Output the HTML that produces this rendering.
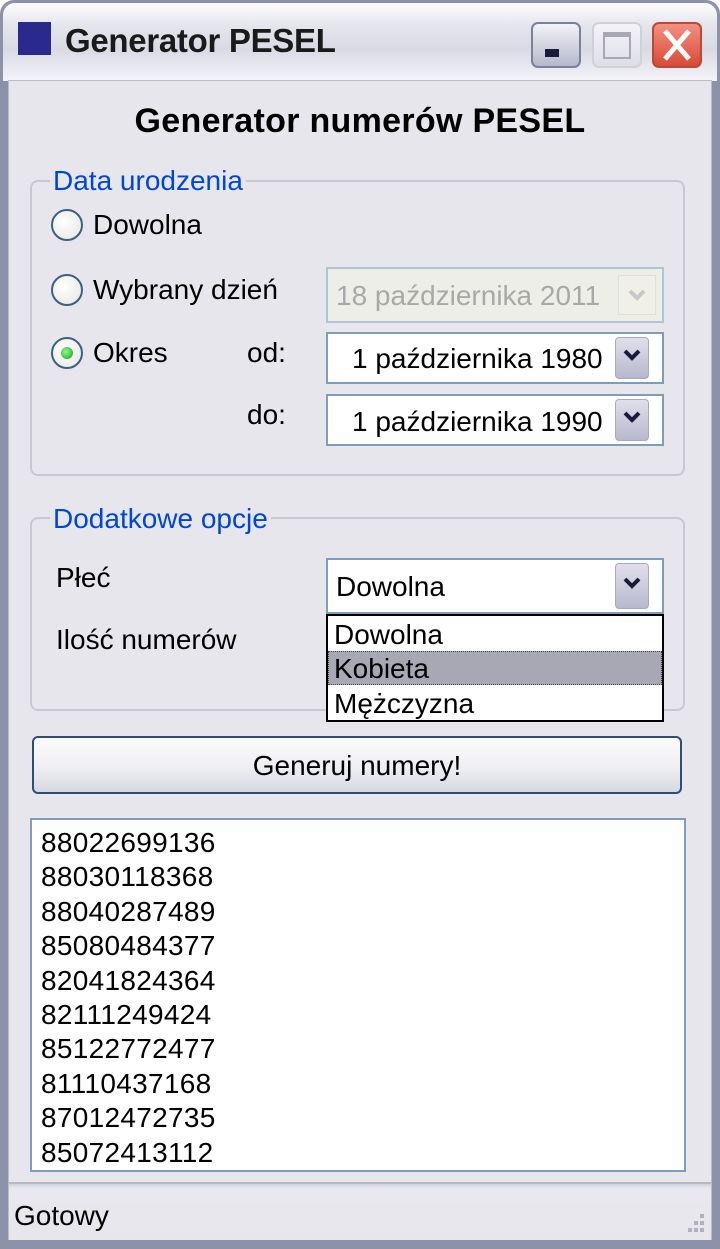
<!DOCTYPE html>
<html><head><meta charset="utf-8"><style>
*{margin:0;padding:0;box-sizing:border-box}
body{width:720px;height:1249px;background:#fff;position:relative;overflow:hidden;font-family:"Liberation Sans",sans-serif;color:#000}
.a{position:absolute}
.t{font-size:28px;white-space:nowrap;line-height:1}
.win{left:0;top:0;width:720px;height:1249px;background:#8d92a8;border-radius:14px 14px 0 0}
.title{left:3px;top:3px;width:714px;height:78px;border-radius:12px 12px 0 0;background:linear-gradient(#fdfdfe 0%,#e4e4ec 30%,#d9dae4 60%,#f4f4f8 100%)}
.client{left:8px;top:80px;width:704px;height:1160px;background:#e6e6ec;border:1px solid #b8bccb}
.grp{border:2px solid #c8c8d0;border-radius:8px}
.lbl{color:#0046d5;background:#e6e6ec;padding:0 3px}
.radio{width:32px;height:32px;border-radius:50%;border:2px solid #3f5f80;background:radial-gradient(circle at 40% 40%,#fff,#e4e4e0)}
.combo{background:#fff;border:2px solid #7f9db9}
.btn{width:34px;height:38px;border-radius:4px;background:linear-gradient(#e0e0ec,#b8b8cc);border:1px solid #a8a8c0}
.btn svg{display:block;margin:10px auto 0}
</style></head><body>
<div class="a win"></div>
<div class="a title"></div>
<div class="a" style="left:18px;top:22px;width:33px;height:33px;background:#2a2a8c"></div>
<div class="a t" style="left:65px;top:24px;font-size:33px;font-weight:bold;color:#1a1a1a;letter-spacing:-0.3px">Generator PESEL</div>
<div class="a" style="left:531px;top:22px;width:50px;height:46px;border-radius:7px;border:2px solid #7c809a;background:linear-gradient(#f2f2f8,#b6b8cc)"></div>
<div class="a" style="left:545px;top:49px;width:14px;height:8px;background:#1a1a3a"></div>
<div class="a" style="left:592px;top:22px;width:50px;height:46px;border-radius:7px;border:2px solid #d0d0da;background:linear-gradient(#f4f4f8,#dedee6)"></div>
<div class="a" style="left:603px;top:32px;width:28px;height:27px;border:2px solid #a8a8b4;border-top-width:5px"></div>
<div class="a" style="left:652px;top:22px;width:50px;height:46px;border-radius:7px;border:2px solid #b84a3a;background:linear-gradient(#f49080,#d84a38)"></div>
<svg class="a" style="left:652px;top:22px" width="50" height="46"><path d="M13 9 L37 37 M37 9 L13 37" stroke="#fff" stroke-width="5"/></svg>

<div class="a client"></div>
<div class="a t" style="left:0;width:720px;text-align:center;top:104px;font-size:34px;font-weight:bold;letter-spacing:0.3px">Generator numerów PESEL</div>

<div class="a grp" style="left:30px;top:180px;width:655px;height:296px"></div>
<div class="a t lbl" style="left:50px;top:167px">Data urodzenia</div>
<div class="a radio" style="left:51px;top:209px"></div>
<div class="a t" style="left:93px;top:211px">Dowolna</div>
<div class="a radio" style="left:51px;top:274px"></div>
<div class="a t" style="left:93px;top:276px">Wybrany dzień</div>
<div class="a radio" style="left:51px;top:337px"></div>
<div class="a" style="left:61px;top:347px;width:12px;height:12px;border-radius:50%;background:radial-gradient(circle at 40% 40%,#8f8,#1a9a1a)"></div>
<div class="a t" style="left:93px;top:339px">Okres</div>
<div class="a t" style="left:247px;top:339px">od:</div>
<div class="a t" style="left:247px;top:401px">do:</div>

<div class="a combo" style="left:326px;top:267px;width:338px;height:56px;background:#eeeee8;border-color:#b0c4d8"></div>
<div class="a t" style="left:336px;top:282px;color:#a8a8a8">18 października 2011</div>
<div class="a" style="left:618px;top:275px;width:38px;height:40px;background:#f0f0e8;border:1px solid #e0e0d8"></div>
<svg class="a" style="left:618px;top:275px" width="38" height="40"><path d="M12 16 L19 23 L26 16" stroke="#c8c8c8" stroke-width="4" fill="none"/></svg>

<div class="a combo" style="left:326px;top:332px;width:338px;height:52px"></div>
<div class="a t" style="left:352px;top:345px">1 października 1980</div>
<div class="a btn" style="left:615px;top:337px;height:42px"><svg width="20" height="16"><path d="M3 3 L10 10 L17 3" stroke="#1a1a3a" stroke-width="4" fill="none"/></svg></div>
<div class="a combo" style="left:326px;top:394px;width:338px;height:52px"></div>
<div class="a t" style="left:352px;top:408px">1 października 1990</div>
<div class="a btn" style="left:615px;top:399px;height:42px"><svg width="20" height="16"><path d="M3 3 L10 10 L17 3" stroke="#1a1a3a" stroke-width="4" fill="none"/></svg></div>

<div class="a grp" style="left:30px;top:517px;width:655px;height:194px"></div>
<div class="a t lbl" style="left:50px;top:505px">Dodatkowe opcje</div>
<div class="a t" style="left:56px;top:564px">Płeć</div>
<div class="a t" style="left:56px;top:626px">Ilość numerów</div>

<div class="a combo" style="left:326px;top:558px;width:338px;height:56px"></div>
<div class="a t" style="left:336px;top:573px">Dowolna</div>
<div class="a btn" style="left:615px;top:563px;height:46px"><svg width="20" height="16" style="margin-top:12px"><path d="M3 3 L10 10 L17 3" stroke="#1a1a3a" stroke-width="4" fill="none"/></svg></div>
<div class="a" style="left:326px;top:614px;width:338px;height:108px;background:#fff;border:2px solid #000"></div>
<div class="a" style="left:328px;top:651px;width:334px;height:34px;background:#a8a8b4;border:1px dotted #444"></div>
<div class="a t" style="left:334px;top:621px">Dowolna</div>
<div class="a t" style="left:334px;top:655px">Kobieta</div>
<div class="a t" style="left:334px;top:690px">Mężczyzna</div>

<div class="a" style="left:32px;top:736px;width:650px;height:58px;border:2px solid #2c4e7a;border-radius:6px;background:linear-gradient(#fcfcfe 0%,#f0f0f4 50%,#d8d8e2 100%)"></div>
<div class="a t" style="left:32px;width:650px;text-align:center;top:752px">Generuj numery!</div>

<div class="a" style="left:30px;top:818px;width:656px;height:354px;background:#fff;border:2px solid #7f9db9"></div>
<div class="a t" style="left:41px;top:826px;font-size:28px;line-height:34.4px;letter-spacing:0.3px">88022699136<br>88030118368<br>88040287489<br>85080484377<br>82041824364<br>82111249424<br>85122772477<br>81110437168<br>87012472735<br>85072413112</div>

<div class="a" style="left:9px;top:1182px;width:702px;height:58px;background:linear-gradient(#d0d0d8 0,#e8e8ee 4px,#e6e6ec 100%);border-top:2px solid #b8b8c4"></div>
<div class="a t" style="left:14px;top:1202px">Gotowy</div>
<svg class="a" style="left:684px;top:1212px" width="24" height="24"><g fill="#b0b0c0"><rect x="16" y="2" width="4" height="4"/><rect x="10" y="9" width="4" height="4"/><rect x="16" y="9" width="4" height="4"/><rect x="4" y="16" width="4" height="4"/><rect x="10" y="16" width="4" height="4"/><rect x="16" y="16" width="4" height="4"/></g></svg>
</body></html>
